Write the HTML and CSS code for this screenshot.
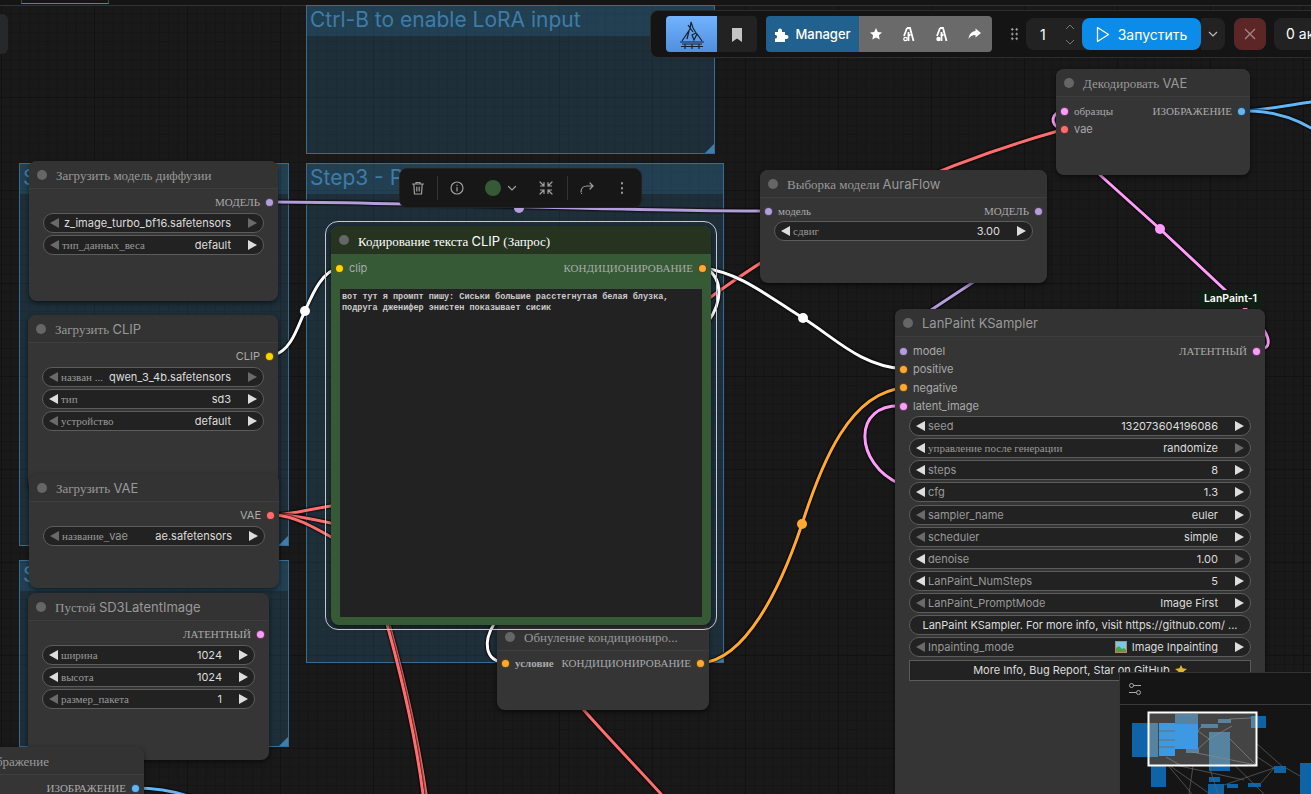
FILE: index.html
```html
<!DOCTYPE html>
<html lang="ru">
<head>
    <meta charset="utf-8">
    <title>ComfyUI</title>
    <link rel="stylesheet" href="styles.css">
</head>
<body>
<div class="canvas">

    <div class="tabstrip"><div class="tab"></div></div>
    <div class="side-stub"></div>

    <!-- groups -->
    <div class="group g-lora"><div class="group-title">Ctrl-B to enable LoRA input</div><b class="group-corner"></b></div>
    <div class="group g-prompt"><div class="group-title">Step3 - Prompt</div><b class="group-corner"></b></div>
    <div class="group g-model"><div class="group-title">S</div><b class="group-corner"></b></div>
    <div class="group g-size"><div class="group-title">S</div><b class="group-corner"></b></div>

    <!-- links -->
    <svg class="wires" width="1311" height="794" viewBox="0 0 1311 794">
        <path class="w-purple" d="M274 202 C 400 202, 640 212, 769 211"/>
        <path class="w-purple" d="M925 314 L975 281"/>
        <path class="w-white" d="M274 355 C 292 350, 298 325, 305 311 C 312 295, 322 270, 340 268"/>
        <path class="w-red" d="M274 515 C 295 514, 312 508, 345 504"/>
        <path class="w-red" d="M274 515 C 295 515, 312 519, 345 526"/>
        <path class="w-red" d="M274 515 C 295 516, 312 526, 345 545"/>
        <path class="w-red" d="M700 305 C 780 245, 900 175, 1065 129"/>
        <path class="w-red" d="M385 610 C 405 680, 418 740, 426 794"/>
        <path class="w-red" d="M383 610 C 403 680, 416 740, 423 794"/>
        <path class="w-red" d="M575 700 C 605 735, 635 765, 661 794"/>
        <path class="w-white" d="M702 268 C 740 272, 770 298, 803 318 C 835 338, 860 366, 904 369"/>
        <path class="w-white" d="M706 268 C 724 280, 722 302, 708 322"/>
        <path class="w-white" d="M494 624 C 484 640, 483 661, 506 663"/>
        <path class="w-orange" d="M701 663 C 745 660, 780 590, 802 524 C 822 462, 850 392, 904 388"/>
        <path class="w-pink" d="M1100 175 L1160 229 L1240 304"/>
        <path class="w-pink" d="M1240 304 C 1262 322, 1282 350, 1256 350"/>
        <path class="w-pink" d="M1065 111 C 1050 111, 1050 126, 1060 128"/>
        <path class="w-pink" d="M904 406 C 850 402, 855 465, 900 484"/>
        <path class="w-blue" d="M1242 111 C 1265 110, 1290 105, 1311 102"/>
        <path class="w-blue" d="M1242 111 C 1265 110, 1290 116, 1311 128"/>
        <path class="w-blue" d="M135 788 C 155 788, 170 790, 188 796"/>
        <circle class="d-purple" cx="519" cy="208" r="5"/>
        <circle class="d-white" cx="305" cy="311" r="5"/>
        <circle class="d-white" cx="803" cy="318" r="5"/>
        <circle class="d-orange" cx="802" cy="524" r="5"/>
        <circle class="d-pink" cx="1160" cy="229" r="5"/>
    </svg>

    <!-- nodes -->
    <div class="node n-clip">
        <div class="node-title"><i></i><span>Загрузить <span class="lat">CLIP</span></span></div>
        <div class="slots">
            <div class="slot"><span></span><span class="slot-out"><span class="lat">CLIP</span><i class="c-yellow"></i></span></div>
        </div>
        <div class="widget off-l off-r"><b class="al"></b><span class="w-label">назван ...</span><span class="w-value">qwen_3_4b.safetensors</span><b class="ar"></b></div>
        <div class="widget"><b class="al"></b><span class="w-label">тип</span><span class="w-value">sd3</span><b class="ar"></b></div>
        <div class="widget off-l"><b class="al"></b><span class="w-label">устройство</span><span class="w-value">default</span><b class="ar"></b></div>
    </div>

    <div class="node n-diff">
        <div class="node-title"><i></i><span>Загрузить модель диффузии</span></div>
        <div class="slots">
            <div class="slot"><span></span><span class="slot-out">МОДЕЛЬ<i class="c-purple"></i></span></div>
        </div>
        <div class="widget off-l off-r"><b class="al"></b><span class="w-value w-wide">z_image_turbo_bf16.safetensors</span><b class="ar"></b></div>
        <div class="widget off-l"><b class="al"></b><span class="w-label">тип_данных_веса</span><span class="w-value">default</span><b class="ar"></b></div>
    </div>

    <div class="node n-vae">
        <div class="node-title"><i></i><span>Загрузить <span class="lat">VAE</span></span></div>
        <div class="slots">
            <div class="slot"><span></span><span class="slot-out"><span class="lat">VAE</span><i class="c-red"></i></span></div>
        </div>
        <div class="widget off-l"><b class="al"></b><span class="w-label">название_<span class="lat">vae</span></span><span class="w-value">ae.safetensors</span><b class="ar"></b></div>
    </div>

    <div class="node n-latent">
        <div class="node-title"><i></i><span>Пустой <span class="lat">SD3LatentImage</span></span></div>
        <div class="slots">
            <div class="slot"><span></span><span class="slot-out">ЛАТЕНТНЫЙ<i class="c-pink"></i></span></div>
        </div>
        <div class="widget"><b class="al"></b><span class="w-label">ширина</span><span class="w-value">1024</span><b class="ar"></b></div>
        <div class="widget"><b class="al"></b><span class="w-label">высота</span><span class="w-value">1024</span><b class="ar"></b></div>
        <div class="widget off-l"><b class="al"></b><span class="w-label">размер_пакета</span><span class="w-value">1</span><b class="ar"></b></div>
    </div>

    <div class="node n-image">
        <div class="node-title"><i></i><span>Сохранить изображение</span></div>
        <div class="slots">
            <div class="slot"><span></span><span class="slot-out">ИЗОБРАЖЕНИЕ<i class="c-blue"></i></span></div>
        </div>
    </div>

    <div class="node n-zero">
        <div class="node-title"><i></i><span>Обнуление кондициониро...</span></div>
        <div class="slots">
            <div class="slot"><span class="slot-in"><i class="c-orange"></i><strong>условие</strong></span><span class="slot-out">КОНДИЦИОНИРОВАНИЕ<i class="c-orange"></i></span></div>
        </div>
    </div>

    <div class="node n-text">
        <div class="node-title"><i></i><span>Кодирование текста <span class="lat">CLIP</span> (Запрос)</span></div>
        <div class="slots">
            <div class="slot"><span class="slot-in"><i class="c-yellow"></i><span class="lat">clip</span></span><span class="slot-out">КОНДИЦИОНИРОВАНИЕ<i class="c-orange"></i></span></div>
        </div>
        <div class="prompt">вот тут я промпт пишу: Сиськи большие расстегнутая белая блузка, подруга дженифер энистен показывает сисик</div>
    </div>
    <div class="selection"></div>

    <div class="node n-aura">
        <div class="node-title"><i></i><span>Выборка модели <span class="lat">AuraFlow</span></span></div>
        <div class="slots">
            <div class="slot"><span class="slot-in"><i class="c-purple"></i>модель</span><span class="slot-out">МОДЕЛЬ<i class="c-purple"></i></span></div>
        </div>
        <div class="widget"><b class="al"></b><span class="w-label">сдвиг</span><span class="w-value">3.00</span><b class="ar"></b></div>
    </div>

    <div class="node n-decode">
        <div class="node-title"><i></i><span>Декодировать <span class="lat">VAE</span></span></div>
        <div class="slots">
            <div class="slot"><span class="slot-in"><i class="c-pink"></i>образцы</span><span class="slot-out">ИЗОБРАЖЕНИЕ<i class="c-blue"></i></span></div>
            <div class="slot"><span class="slot-in"><i class="c-red"></i><span class="lat">vae</span></span></div>
        </div>
    </div>

    <div class="node n-sampler">
        <div class="node-title"><i></i><span class="lat">LanPaint KSampler</span></div>
        <div class="slots">
            <div class="slot"><span class="slot-in"><i class="c-purple"></i><span class="lat">model</span></span><span class="slot-out">ЛАТЕНТНЫЙ<i class="c-pink"></i></span></div>
            <div class="slot"><span class="slot-in"><i class="c-orange"></i><span class="lat">positive</span></span></div>
            <div class="slot"><span class="slot-in"><i class="c-orange"></i><span class="lat">negative</span></span></div>
            <div class="slot"><span class="slot-in"><i class="c-pink"></i><span class="lat">latent_image</span></span></div>
        </div>
        <div class="widget"><b class="al"></b><span class="w-label lat">seed</span><span class="w-value">132073604196086</span><b class="ar"></b></div>
        <div class="widget off-r"><b class="al"></b><span class="w-label">управление после генерации</span><span class="w-value">randomize</span><b class="ar"></b></div>
        <div class="widget"><b class="al"></b><span class="w-label lat">steps</span><span class="w-value">8</span><b class="ar"></b></div>
        <div class="widget"><b class="al"></b><span class="w-label lat">cfg</span><span class="w-value">1.3</span><b class="ar"></b></div>
        <div class="widget off-l"><b class="al"></b><span class="w-label lat">sampler_name</span><span class="w-value">euler</span><b class="ar"></b></div>
        <div class="widget off-l"><b class="al"></b><span class="w-label lat">scheduler</span><span class="w-value">simple</span><b class="ar"></b></div>
        <div class="widget off-r"><b class="al"></b><span class="w-label lat">denoise</span><span class="w-value">1.00</span><b class="ar"></b></div>
        <div class="widget"><b class="al"></b><span class="w-label lat">LanPaint_NumSteps</span><span class="w-value">5</span><b class="ar"></b></div>
        <div class="widget off-l"><b class="al"></b><span class="w-label lat">LanPaint_PromptMode</span><span class="w-value">Image First</span><b class="ar"></b></div>
        <div class="widget widget-text">LanPaint KSampler. For more info, visit https://github.com/ ...</div>
        <div class="widget off-l"><b class="al"></b><span class="w-label lat">Inpainting_mode</span><span class="w-value w-icon">
            <svg width="12" height="12" viewBox="0 0 12 12"><rect width="12" height="12" fill="#b98a5a"/><rect x="1" y="1" width="10" height="10" fill="#7cc7e8"/><path d="M1 11V7l3-2 3 3 2-1 2 2v2z" fill="#4e9e4a"/></svg>
            Image Inpainting</span><b class="ar"></b></div>
        <div class="more-btn">More Info, Bug Report, Star on GitHub
            <svg width="12" height="10" viewBox="0 0 12 10"><path d="M6 0l1.600 3.200L12 4 8.600 6.400 9.600 10 6 8.200 2.400 10l1-3.600L0 4l4.400-.8z" fill="#e2b52d"/></svg>
        </div>
    </div>

    <div class="badge">LanPaint-1</div>

    <!-- selection toolbox -->
    <div class="toolbox">
        <svg class="tb-icon" width="16" height="16" viewBox="0 0 16 16"><path d="M2.500 4h11M6 4V2.500h4V4M3.800 4l.7 10h7l.7-10M6.800 7v4M9.200 7v4"/></svg>
        <span class="tb-sep"></span>
        <svg class="tb-icon" width="16" height="16" viewBox="0 0 16 16"><circle cx="8" cy="8" r="6"/><path d="M8 7.500v3.500M8 5v.6"/></svg>
        <i class="tb-color"></i>
        <svg class="tb-icon tb-chev" width="10" height="10" viewBox="0 0 10 10"><path d="M1.500 3.500L5 7l3.500-3.500"/></svg>
        <svg class="tb-icon tb-shrink" width="16" height="16" viewBox="0 0 16 16"><path d="M2 2l4 4M6 2.500V6H2.500M14 2l-4 4M10 2.500V6h3.500M2 14l4-4M6 13.500V10H2.500M14 14l-4-4M10 13.500V10h3.500"/></svg>
        <span class="tb-sep tb-sep-wide"></span>
        <svg class="tb-icon" width="16" height="16" viewBox="0 0 16 16"><path d="M2 12c0-4 3-6 6-6h6M11 3l3 3-3 3M2.500 13.500h.1"/></svg>
        <svg class="tb-icon tb-more" width="16" height="16" viewBox="0 0 16 16"><path d="M8 3v.5M8 8v.5M8 12.500v.5"/></svg>
    </div>

    <!-- top toolbar -->
    <div class="toolbar">
        <div class="tool-logo">
            <svg width="28" height="30" viewBox="0 0 28 30"><path d="M4 22L12 10l1-7 2 6 3 5-4 2 2 5 3-6 5 7M10 6l5 7M11 12l-2 8M2 23h24M4 25h20M3 27.500h22M7 30v-5M14 30v-5M21 30v-5" fill="none" stroke="#18222e" stroke-width="1.200"/></svg>
        </div>
        <div class="tool-mark">
            <svg width="12" height="15" viewBox="0 0 12 15"><path d="M1 1h10v14l-5-3.500L1 15z" fill="#c4c4c4"/></svg>
        </div>
        <div class="manager">
            <div class="manager-main">
                <svg width="15" height="15" viewBox="0 0 15 15"><path d="M1 5h3V3.500a2 2 0 0 1 4 0V5h3v3h1.500a2 2 0 0 1 0 4H11v3H1v-3.500h1a2 2 0 0 0 0-3.500H1z" fill="#fff"/></svg>
                <span>Manager</span>
            </div>
            <div class="manager-tools">
                <svg width="12" height="12" viewBox="0 0 12 12"><path d="M6 0l1.800 3.900 4.200.5-3.100 2.900.8 4.200L6 9.400 2.300 11.500l.8-4.200L0 4.400l4.200-.5z" fill="#fff"/></svg>
                <svg width="13" height="15" viewBox="0 0 13 15"><path d="M5 1h3l3.500 13M5 1L2 9M6.500 5v9M8.500 8h-3" fill="none" stroke="#fff" stroke-width="1.800"/><circle cx="3.500" cy="12" r="1.700" fill="none" stroke="#fff" stroke-width="1.300"/></svg>
                <svg width="13" height="15" viewBox="0 0 13 15"><path d="M5 1h3l3.500 13M5 1L2 9M6.500 5v9M8.500 8h-3" fill="none" stroke="#fff" stroke-width="1.800"/><circle cx="3.500" cy="12" r="2.200" fill="#fff"/></svg>
                <svg width="13" height="12" viewBox="0 0 13 12"><path d="M7.500 0.500L13 5l-5.500 4.500V7C4 7 2 8.500 0.500 11 1 6.500 3.500 3.500 7.500 3z" fill="#fff"/></svg>
            </div>
        </div>
        <div class="grip"></div>
        <div class="queue-count">
            <span>1</span>
            <div class="stepper">
                <svg width="10" height="6" viewBox="0 0 10 6"><path d="M1 5l4-4 4 4"/></svg>
                <svg width="10" height="6" viewBox="0 0 10 6"><path d="M1 1l4 4 4-4"/></svg>
            </div>
        </div>
        <div class="run-btn">
            <svg width="14" height="17" viewBox="0 0 14 17"><path d="M1.500 1.500L12.500 8.500 1.500 15.500z" fill="none" stroke="#fff" stroke-width="1.300" stroke-linejoin="round"/></svg>
            <span>Запустить</span>
        </div>
        <div class="run-drop">
            <svg width="10" height="6" viewBox="0 0 10 6"><path d="M1 1l4 4 4-4" fill="none" stroke="#bbb" stroke-width="1.200"/></svg>
        </div>
        <div class="cancel-btn">
            <svg width="12" height="12" viewBox="0 0 12 12"><path d="M1 1l10 10M11 1L1 11" stroke="#a88" stroke-width="1.200"/></svg>
        </div>
        <div class="active-btn">0 активно</div>
    </div>

    <!-- minimap -->
    <div class="minimap">
        <div class="minimap-head">
            <svg width="14" height="14" viewBox="0 0 14 14"><g fill="none" stroke="#aaa" stroke-width="1"><circle cx="3.500" cy="3.500" r="2"/><path d="M5.500 3.500H13M1 10.500h7.500"/><circle cx="10.500" cy="10.500" r="2"/></g></svg>
        </div>
        <svg class="minimap-body" width="191" height="89" viewBox="1120 705 191 89">
            <g fill="#0f64a8">
                <rect x="1132" y="723" width="26" height="34"/>
                <rect x="1151" y="757" width="15" height="30"/>
                <rect x="1209" y="765" width="21" height="6"/>
                <rect x="1251" y="716" width="15" height="12"/>
                <rect x="1274" y="766" width="12" height="7"/>
                <rect x="1300" y="763" width="12" height="31"/>
                <rect x="1209" y="777" width="11" height="5"/>
                <rect x="1208" y="784" width="16" height="10"/>
                <rect x="1227" y="784" width="11" height="4"/>
                <rect x="1248" y="783" width="13" height="4"/>
            </g>
            <g fill="none" stroke="#666" stroke-width=".7">
                <path d="M1166 763L1210 794M1166 763L1192 794M1166 763L1244 780M1198 731L1218 794M1198 731L1189 794"/>
                <path d="M1230 720L1283 767M1208 739L1264 794M1230 739L1274 768"/>
                <path d="M1286 768L1300 776M1274 768L1224 785M1274 768L1261 783"/>
            </g>
            <rect class="mm-view" x="1148.500" y="712.500" width="108" height="53"/>
            <g fill="#56839f">
                <rect x="1175" y="714" width="23" height="10"/>
                <rect x="1149" y="723" width="9" height="34"/>
                <rect x="1186" y="749" width="13" height="4"/>
                <rect x="1201" y="724" width="17" height="4"/>
                <rect x="1218" y="719" width="13" height="4"/>
                <rect x="1251" y="716" width="5" height="12"/>
                <rect x="1209" y="732" width="21" height="33"/>
                <rect x="1159" y="723" width="16" height="33"/>
            </g>
            <g fill="#3d9ae2">
                <rect x="1175" y="724" width="23" height="25"/>
                <rect x="1159" y="723" width="16" height="7"/>
                <rect x="1159" y="732" width="16" height="7"/>
                <rect x="1159" y="741" width="16" height="5"/>
                <rect x="1159" y="748" width="16" height="8"/>
            </g>
            <g fill="none" stroke="#8a8a8a" stroke-width=".7">
                <path d="M1230 719L1251 718M1209 739L1232 726M1230 739L1256 765M1198 731L1209 739M1198 749L1209 739M1201 727L1198 731M1166 757L1180 765M1192 752L1256 765"/>
            </g>
            <rect class="mm-frame" x="1148.500" y="712.500" width="108" height="53"/>
        </svg>
    </div>
</div>
</body>
</html>
```
FILE: styles.css
```css
html,
body {
    margin: 0;
    padding: 0;
    background: #181818;
}

.canvas {
    position: relative;
    width: 1311px;
    height: 794px;
    overflow: hidden;
    font-family: "Liberation Serif", serif;
    background-color: #191919;
    background-image:
        linear-gradient(to right, #121212 1px, transparent 1px),
        linear-gradient(to bottom, #121212 1px, transparent 1px),
        linear-gradient(to right, #151515 1px, transparent 1px),
        linear-gradient(to bottom, #151515 1px, transparent 1px);
    background-size: 93px 93px, 93px 93px, 9.3px 9.3px, 9.3px 9.3px;
    background-position: 1px 0, 0 4px, 1px 0, 0 4px;
}

.lat {
    font-family: Inter, "Liberation Sans", sans-serif;
}

/* top strip and stub */
.tabstrip {
    position: absolute;
    left: 0;
    top: 0;
    width: 100%;
    height: 5px;
    background: #151515;
    border-bottom: 1px solid #333;
}

.tab {
    width: 88px;
    height: 4px;
    margin-left: 21px;
    border: 1px solid #444;
    border-top: none;
    border-bottom: 1px solid #3b86d8;
    box-sizing: border-box;
}

.side-stub {
    position: absolute;
    left: -8px;
    top: 14px;
    width: 16px;
    height: 40px;
    background: #26282a;
    border-radius: 6px;
}

/* groups */
.group {
    position: absolute;
    box-sizing: border-box;
    background: rgba(51, 136, 187, .2);
    border: 1px solid #376c94;
}

.group-title {
    height: 30px;
    padding-left: 3px;
    line-height: 27px;
    font-family: Inter, sans-serif;
    font-size: 21px;
    color: #3f7ca8;
    background: rgba(51, 136, 187, .2);
    white-space: nowrap;
    overflow: hidden;
}

.g-lora .group-title {
    line-height: 28px;
}

.group-corner {
    position: absolute;
    right: 0;
    bottom: 0;
    width: 0;
    height: 0;
    border-left: 9px solid transparent;
    border-bottom: 9px solid #3d7eae;
}

.g-lora {
    left: 306px;
    top: 5px;
    width: 409px;
    height: 149px;
}

.g-prompt {
    left: 306px;
    top: 163px;
    width: 418px;
    height: 500px;
}

.g-model {
    left: 19px;
    top: 163px;
    width: 270px;
    height: 383px;
}

.g-size {
    left: 19px;
    top: 560px;
    width: 270px;
    height: 187px;
}

/* wires */
.wires {
    position: absolute;
    left: 0;
    top: 0;
}

.wires path {
    fill: none;
    stroke-width: 3;
    stroke-linecap: round;
    filter: drop-shadow(0 0 1px #000) drop-shadow(0 0 .6px #000);
}

.w-purple { stroke: #b39ddb; }
.w-white { stroke: #fff; }
.w-red { stroke: #ff6e6e; }
.w-orange { stroke: #ffa931; }
.w-pink { stroke: #ff9cf9; }
.w-blue { stroke: #64b5f6; }
.d-purple { fill: #b39ddb; }
.d-white { fill: #fff; }
.d-orange { fill: #ffa931; }
.d-pink { fill: #ff9cf9; }

/* nodes */
.node {
    position: absolute;
    box-sizing: border-box;
    background: #353535;
    border-radius: 8px;
    box-shadow: 0 2px 5px rgba(0, 0, 0, .55);
    font-size: 11px;
    color: #aaa;
}

.n-diff { left: 29px; top: 161px; width: 249px; height: 140px; }
.n-clip { left: 28px; top: 315px; width: 250px; height: 175px; }
.n-vae { left: 29px; top: 474px; width: 250px; height: 114px; }
.n-latent { left: 28px; top: 593px; width: 241px; height: 167px; }
.n-image { left: -112px; top: 747px; width: 256px; height: 90px; }
.n-zero { left: 497px; top: 623px; width: 212px; height: 87px; }
.n-text { left: 331px; top: 226px; width: 380px; height: 399px; background: #355a35; }
.n-aura { left: 760px; top: 170px; width: 287px; height: 113px; }
.n-decode { left: 1056px; top: 69px; width: 194px; height: 106px; }
.n-sampler { left: 895px; top: 309px; width: 370px; height: 520px; }

.node-title {
    box-sizing: border-box;
    display: flex;
    align-items: center;
    gap: 9px;
    height: 28px;
    padding-left: 8px;
    font-size: 13px;
    color: #999;
    white-space: nowrap;
    overflow: hidden;
    border-bottom: 1px solid #3e3e3e;
    border-radius: 8px 8px 0 0;
    background: #333;
}

.node-title > span:not(.lat) {
    padding-top: 2px;
}

.node-title i {
    flex: none;
    width: 10px;
    height: 10px;
    border-radius: 50%;
    background: #666;
}

.n-text .node-title {
    background: #25331f;
    border-bottom: none;
    color: #fff;
}

.slots {
    padding: 4px 0 1.670px;
}

.n-sampler .slots,
.n-decode .slots,
.n-text .slots {
    padding: 5px 0 .670px;
}

.n-zero .slots {
    padding-top: 3px;
}

.n-aura .slots {
    padding-bottom: .670px;
}

.slot {
    display: flex;
    justify-content: space-between;
    align-items: center;
    height: 18.330px;
    padding: 0 4px;
    white-space: nowrap;
}

.slot-in,
.slot-out {
    display: flex;
    align-items: center;
    gap: 5px;
}

.slot-in strong {
    font-weight: bold;
}

.slot i {
    flex: none;
    width: 9px;
    height: 9px;
    border-radius: 50%;
    border: 1px solid rgba(0, 0, 0, .6);
    box-sizing: border-box;
}

.c-yellow { background: #ffd500; }
.c-purple { background: #b39ddb; }
.c-red { background: #ff6e6e; }
.c-pink { background: #ff9cf9; }
.c-blue { background: #64b5f6; }
.c-orange { background: #ffa931; }

/* widgets */
.widget {
    box-sizing: border-box;
    display: flex;
    align-items: center;
    height: 20px;
    margin: 0 14px 2.150px;
    padding: 0 6px 0 6px;
    background: #222;
    border: 1px solid #5c5c5c;
    border-radius: 10px;
    font-size: 11px;
    color: #999;
    white-space: nowrap;
}

.al,
.ar {
    flex: none;
    width: 0;
    height: 0;
    border-top: 5px solid transparent;
    border-bottom: 5px solid transparent;
}

.al { border-right: 9px solid #ddd; }
.ar { border-left: 9px solid #ddd; }
.off-l .al { border-right-color: #6a6a6a; }
.off-r .ar { border-left-color: #6a6a6a; }

.w-label {
    flex: 1;
    margin-left: 3px;
    overflow: hidden;
}

.w-value {
    margin-right: 17px;
    font-family: Inter, sans-serif;
    color: #ddd;
}

.w-wide {
    flex: 1;
    text-align: right;
}

.w-icon {
    display: flex;
    align-items: center;
    gap: 5px;
}

.widget-text {
    justify-content: center;
    font-family: Inter, sans-serif;
    color: #ddd;
}

.more-btn {
    display: flex;
    justify-content: center;
    align-items: center;
    gap: 5px;
    height: 19px;
    margin: 0 14px;
    background: #222;
    border: 1px solid #5c5c5c;
    font-family: Inter, sans-serif;
    font-size: 11px;
    color: #ddd;
    white-space: nowrap;
}

.prompt {
    box-sizing: border-box;
    height: 328px;
    margin: 11.500px 9px 0;
    padding: 3px 2px;
    background: #222;
    font-family: "Liberation Mono", monospace;
    font-size: 8.500px;
    line-height: 11px;
    font-weight: bold;
    color: #ccc;
}

.selection {
    position: absolute;
    left: 325px;
    top: 221px;
    width: 390px;
    height: 407px;
    border: 1px solid #c8c8c8;
    border-radius: 13px;
}

.badge {
    position: absolute;
    left: 1199px;
    top: 290px;
    width: 63px;
    height: 18px;
    line-height: 17px;
    text-align: center;
    background: #0f1f14;
    border-radius: 5px 5px 0 0;
    font-family: Inter, sans-serif;
    font-size: 10.500px;
    font-weight: 600;
    color: #fff;
}

/* selection toolbox */
.toolbox {
    position: absolute;
    left: 399px;
    top: 168px;
    box-sizing: border-box;
    width: 243px;
    height: 40px;
    display: flex;
    align-items: center;
    background: #171717;
    border: 1px solid #222;
    border-radius: 8px;
}

.tb-icon {
    flex: none;
    margin-left: 11px;
    fill: none;
    stroke: #a0a0a0;
    stroke-width: 1.200;
    stroke-linecap: round;
}

.toolbox .tb-icon:first-child {
    margin-left: 10px;
}

.tb-sep {
    flex: none;
    width: 1px;
    height: 24px;
    margin-left: 11px;
    background: #333;
}

.tb-sep-wide {
    margin-left: 13px;
}

.tb-color {
    flex: none;
    width: 16px;
    height: 16px;
    margin-left: 20px;
    border-radius: 50%;
    background: #355a35;
}

.tb-chev { margin-left: 6px; }
.tb-shrink { margin-left: 21px; }
.tb-more { margin-left: 19px; stroke-width: 2; }

/* top toolbar */
.toolbar {
    position: absolute;
    left: 650px;
    top: 10px;
    box-sizing: border-box;
    width: 680px;
    height: 48px;
    display: flex;
    align-items: center;
    padding-left: 15px;
    background: #141414;
    border: 1px solid #2c2c2c;
    border-radius: 8px;
    font-family: Inter, sans-serif;
    color: #fff;
}

.toolbar > div {
    flex: none;
}

.tool-logo {
    box-sizing: border-box;
    width: 51px;
    height: 36px;
    display: flex;
    justify-content: center;
    align-items: center;
    background: linear-gradient(#72b2ff, #4f90dd);
    border-radius: 4px 0 0 4px;
}

.tool-mark {
    width: 40px;
    height: 36px;
    display: flex;
    justify-content: center;
    align-items: center;
    background: #222;
    border-radius: 0 4px 4px 0;
}

.manager {
    display: flex;
    height: 36px;
    margin-left: 9px;
    border-radius: 4px;
    overflow: hidden;
}

.manager-main {
    width: 93px;
    display: flex;
    align-items: center;
    justify-content: center;
    gap: 6px;
    background: #21618f;
    font-size: 13px;
    font-weight: 500;
}

.manager-tools {
    width: 133px;
    display: flex;
    align-items: center;
    justify-content: space-around;
    padding: 0 1px;
    box-sizing: border-box;
    background: #6a6a6a;
}

.grip {
    width: 9px;
    height: 14px;
    margin-left: 18px;
    background-image: radial-gradient(circle, #aaa 1px, transparent 1.200px);
    background-size: 4.500px 4.700px;
}

.queue-count {
    box-sizing: border-box;
    width: 64px;
    height: 32px;
    margin-left: 7px;
    padding-left: 14px;
    display: flex;
    align-items: center;
    justify-content: space-between;
    background: #222;
    border-radius: 8px 0 0 8px;
    font-size: 14px;
}

.stepper {
    display: flex;
    flex-direction: column;
    gap: 9px;
    margin-right: 15px;
}

.stepper svg {
    fill: none;
    stroke: #777;
    stroke-width: 1;
}

.run-btn {
    width: 119px;
    height: 32px;
    margin-left: -8px;
    display: flex;
    align-items: center;
    justify-content: center;
    gap: 8px;
    background: #0b8ce9;
    border-radius: 8px;
    font-size: 14px;
}

.run-drop {
    width: 24px;
    height: 32px;
    display: flex;
    align-items: center;
    justify-content: center;
    background: #222;
    border-radius: 0 8px 8px 0;
}

.cancel-btn {
    width: 32px;
    height: 32px;
    margin-left: 9px;
    display: flex;
    align-items: center;
    justify-content: center;
    background: #5c2626;
    border-radius: 8px;
}

.active-btn {
    height: 32px;
    margin-left: 8px;
    padding: 0 12px;
    line-height: 32px;
    background: #222;
    border-radius: 8px;
    font-size: 14px;
    white-space: nowrap;
}

/* minimap */
.minimap {
    position: absolute;
    left: 1119px;
    top: 672px;
    width: 192px;
    height: 122px;
    background: #151515;
    border-top: 1px solid #333;
    border-left: 1px solid #333;
    box-sizing: border-box;
}

.minimap-head {
    box-sizing: border-box;
    height: 32px;
    padding: 9px 0 0 8px;
    border-bottom: 1px solid #3a3a3a;
}

.minimap-body {
    display: block;
}

.mm-view {
    fill: #444;
}

.mm-frame {
    fill: none;
    stroke: #fff;
    stroke-width: 2;
}
```
